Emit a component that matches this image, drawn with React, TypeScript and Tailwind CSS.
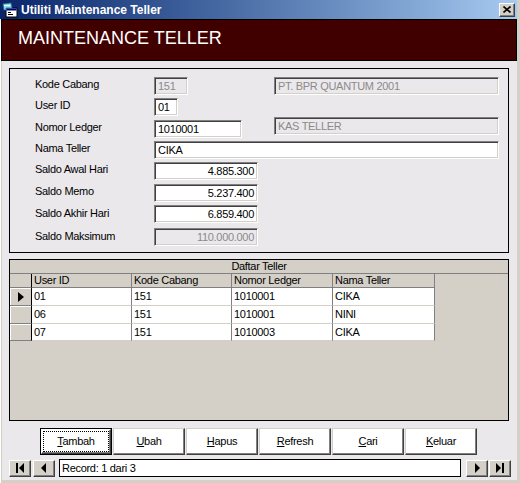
import React from "react";

const sunken =
  "border border-t-[#808080] border-l-[#808080] border-b-white border-r-white shadow-[inset_1px_1px_0_#404040,inset_-1px_-1px_0_#d4d0c8]";
const raised =
  "border border-t-white border-l-white border-b-[#404040] border-r-[#404040] shadow-[inset_-1px_-1px_0_#808080]";

function Field({
  value,
  w,
  right,
  disabled,
  extra = "",
}: {
  value: string;
  w: string;
  right?: boolean;
  disabled?: boolean;
  extra?: string;
}) {
  return (
    <div
      className={`h-[18px] flex items-center px-[3px] whitespace-nowrap ${sunken} ${w} ${
        right ? "justify-end" : ""
      } ${disabled ? "bg-[#ebe8ec] text-[#8a8a8a]" : "bg-white text-black"} ${extra}`}
    >
      {value}
    </div>
  );
}

function Label({ text, pb }: { text: string; pb: string }) {
  return <div className={`w-[119px] h-[18px] flex items-center ${pb}`}>{text}</div>;
}

function AppIcon() {
  return (
    <svg width="16" height="16" viewBox="0 0 16 16">
      <rect x="4" y="6" width="11" height="9" fill="#ffffff" stroke="#000" strokeWidth="1" />
      <rect x="4.5" y="6.5" width="10" height="2" fill="#000080" />
      <rect x="6" y="10" width="3" height="1" fill="#000" />
      <rect x="6" y="12" width="5" height="1" fill="#000" />
      <path d="M1 2 L9 1 L10 6 L4 6 L4 8 L2 8 Z" fill="#7fe0f0" stroke="#2a6f8a" strokeWidth="0.8" />
      <rect x="2" y="3" width="6" height="1" fill="#ffffff" />
    </svg>
  );
}

function NavBtn({ kind }: { kind: "first" | "prev" | "next" | "last" }) {
  return (
    <div className={`w-[22px] h-[17px] bg-[#d4d0c8] ${raised} flex items-center justify-center`}>
      <svg width="20" height="15" viewBox="0 0 20 15">
        {kind === "first" && (
          <>
            <rect x="6" y="2" width="2" height="10" fill="#000" />
            <polygon points="9,7 14,2 14,12" fill="#000" />
          </>
        )}
        {kind === "prev" && <polygon points="7,7 12,2 12,12" fill="#000" />}
        {kind === "next" && <polygon points="8,2 13,7 8,12" fill="#000" />}
        {kind === "last" && (
          <>
            <polygon points="6,2 11,7 6,12" fill="#000" />
            <rect x="12" y="2" width="2" height="10" fill="#000" />
          </>
        )}
      </svg>
    </div>
  );
}

function Btn({ first, rest, def }: { first: string; rest: string; def?: boolean }) {
  if (def) {
    return (
      <div className="w-[72px] h-[27px] border border-black bg-white">
        <div className={`w-full h-full bg-white ${raised} p-[1px]`}>
          <div className="w-full h-full border border-dotted border-black flex items-center justify-center">
            <span>
              <span className="underline">{first}</span>
              {rest}
            </span>
          </div>
        </div>
      </div>
    );
  }
  return (
    <div
      className={`w-[72px] h-[27px] bg-white border border-t-[#d4d0c8] border-l-[#d4d0c8] border-b-[#404040] border-r-[#404040] shadow-[inset_-1px_-1px_0_#808080] flex items-center justify-center`}
    >
      <span>
        <span className="underline">{first}</span>
        {rest}
      </span>
    </div>
  );
}

const rows = [
  ["01", "151", "1010001", "CIKA"],
  ["06", "151", "1010001", "NINI"],
  ["07", "151", "1010003", "CIKA"],
];
const rowH = ["h-[18px]", "h-[18px]", "h-[17px]"];
const colW = ["w-[100px]", "w-[100px]", "w-[101px]", "w-[102px]"];

export default function App() {
  return (
    <div className="w-[520px] h-[483px] bg-[#d4d0c8] flex flex-col overflow-hidden font-['Liberation_Sans',Arial,sans-serif] text-[11px] tracking-[-0.3px] text-black">
      {/* Title bar */}
      <div className="h-[19px] w-[517px] flex items-center bg-linear-to-r from-[#0a246a] to-[#a6caf0] pl-[2px] pr-[2px]">
        <AppIcon />
        <span className="ml-[3px] text-white font-bold text-[12px] tracking-[0px]">
          Utiliti Maintenance Teller
        </span>
        <div className={`ml-auto w-[16px] h-[14px] bg-[#d4d0c8] ${raised} flex items-center justify-center`}>
          <svg width="8" height="7" viewBox="0 0 8 7">
            <path d="M0.5 0.5 L7.5 6.5 M7.5 0.5 L0.5 6.5" stroke="#000" strokeWidth="1.6" />
          </svg>
        </div>
      </div>

      <div className="flex-1 flex flex-col border-l border-white pr-[3px] pb-[3px]">
        {/* Header */}
        <div className="h-[42px] bg-[#400000] border border-black flex items-center pl-[16px] pb-[4px]">
          <span className="text-white text-[18px] tracking-[0px]">MAINTENANCE TELLER</span>
        </div>

        {/* Form area */}
        <div className="flex-1 bg-[#ebe8ec] ml-[1px] pl-[7px] flex flex-col">
          {/* Group box fields */}
          <div className="w-[500px] h-[185px] mt-[7px] border border-black flex flex-col pl-[25px]">
            <div className="mt-[8px] h-[18px] flex items-center">
              <Label text="Kode Cabang" pb="pb-[4px]" />
              <Field value="151" w="w-[34px]" disabled />
              <Field value="PT. BPR QUANTUM 2001" w="w-[225px]" disabled extra="ml-[86px]" />
            </div>
            <div className="mt-[3px] h-[18px] flex items-center">
              <Label text="User ID" pb="pb-[4px]" />
              <Field value="01" w="w-[24px]" />
            </div>
            <div className="mt-[1px] h-[21px] flex items-start">
              <div className="mt-[3px]">
                <Label text="Nomor Ledger" pb="pb-[4px]" />
              </div>
              <Field value="1010001" w="w-[88px]" extra="mt-[3px]" />
              <Field value="KAS TELLER" w="w-[225px]" disabled extra="ml-[32px]" />
            </div>
            <div className="mt-[3px] h-[18px] flex items-center">
              <Label text="Nama Teller" pb="pb-[4px]" />
              <Field value="CIKA" w="w-[345px]" />
            </div>
            <div className="mt-[3px] h-[18px] flex items-center">
              <Label text="Saldo Awal Hari" pb="pb-[4px]" />
              <Field value="4.885.300" w="w-[104px]" right />
            </div>
            <div className="mt-[4px] h-[18px] flex items-center">
              <Label text="Saldo Memo" pb="pb-[4px]" />
              <Field value="5.237.400" w="w-[104px]" right />
            </div>
            <div className="mt-[3px] h-[18px] flex items-center">
              <Label text="Saldo Akhir Hari" pb="pb-[2px]" />
              <Field value="6.859.400" w="w-[104px]" right />
            </div>
            <div className="mt-[5px] h-[18px] flex items-center">
              <Label text="Saldo Maksimum" pb="pb-[1px]" />
              <Field value="110.000.000" w="w-[104px]" right disabled />
            </div>
          </div>

          {/* Grid */}
          <div className="w-[500px] h-[162px] mt-[6px] border border-black bg-[#d4d0c8] flex flex-col">
            <div className="h-[14px] border-b border-[#808080] flex items-center justify-center">
              Daftar Teller
            </div>
            <div className="h-[14px] flex">
              <div className="w-[22px] h-full border-r border-black border-b border-b-[#808080]" />
              {["User ID", "Kode Cabang", "Nomor Ledger", "Nama Teller"].map((h, i) => (
                <div
                  key={h}
                  className={`${colW[i]} h-full border-r border-b border-[#808080] pl-[2px] flex items-center`}
                >
                  {h}
                </div>
              ))}
            </div>
            {rows.map((r, ri) => (
              <div key={ri} className={`${rowH[ri]} flex`}>
                <div className="w-[22px] h-full border-r border-black border-b border-b-[#808080] shadow-[inset_1px_1px_0_#ffffff] flex items-center justify-center">
                  {ri === 0 && (
                    <svg width="6" height="10" viewBox="0 0 6 10">
                      <polygon points="0,0 6,5 0,10" fill="#000" />
                    </svg>
                  )}
                </div>
                {r.map((c, ci) => (
                  <div
                    key={ci}
                    className={`${colW[ci]} h-full bg-white border-r border-[#808080] border-b border-b-[#d4d0c8] pl-[2px] flex items-center`}
                  >
                    {c}
                  </div>
                ))}
              </div>
            ))}
          </div>

          {/* Buttons */}
          <div className="mt-[7px] ml-[31px] flex gap-[1px]">
            <Btn first="T" rest="ambah" def />
            <Btn first="U" rest="bah" />
            <Btn first="H" rest="apus" />
            <Btn first="R" rest="efresh" />
            <Btn first="C" rest="ari" />
            <Btn first="K" rest="eluar" />
          </div>

          {/* Nav */}
          <div className="mt-[4px] h-[18px] flex items-end">
            <NavBtn kind="first" />
            <div className="ml-[2px]">
              <NavBtn kind="prev" />
            </div>
            <div className="ml-[4px] w-[402px] h-[18px] bg-white border border-black flex items-center pl-[2px]">
              Record: 1 dari 3
            </div>
            <div className="ml-[5px]">
              <NavBtn kind="next" />
            </div>
            <div className="ml-[1px]">
              <NavBtn kind="last" />
            </div>
          </div>
        </div>
      </div>
    </div>
  );
}
